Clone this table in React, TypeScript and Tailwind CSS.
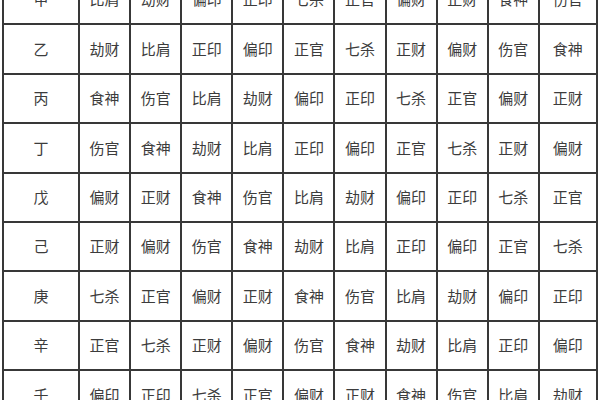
import React from "react";

const rows: [string, string[]][] = [
  ["甲", ["比肩", "劫财", "偏印", "正印", "七杀", "正官", "偏财", "正财", "食神", "伤官"]],
  ["乙", ["劫财", "比肩", "正印", "偏印", "正官", "七杀", "正财", "偏财", "伤官", "食神"]],
  ["丙", ["食神", "伤官", "比肩", "劫财", "偏印", "正印", "七杀", "正官", "偏财", "正财"]],
  ["丁", ["伤官", "食神", "劫财", "比肩", "正印", "偏印", "正官", "七杀", "正财", "偏财"]],
  ["戊", ["偏财", "正财", "食神", "伤官", "比肩", "劫财", "偏印", "正印", "七杀", "正官"]],
  ["己", ["正财", "偏财", "伤官", "食神", "劫财", "比肩", "正印", "偏印", "正官", "七杀"]],
  ["庚", ["七杀", "正官", "偏财", "正财", "食神", "伤官", "比肩", "劫财", "偏印", "正印"]],
  ["辛", ["正官", "七杀", "正财", "偏财", "伤官", "食神", "劫财", "比肩", "正印", "偏印"]],
  ["壬", ["偏印", "正印", "七杀", "正官", "偏财", "正财", "食神", "伤官", "比肩", "劫财"]],
];

export default function App() {
  return (
    <div className="w-[600px] h-[400px] overflow-hidden bg-white">
      <div
        className="ml-[2px] -mt-[26px] w-[596px] grid grid-cols-[74px_repeat(9,49.1px)_56px] auto-rows-[47.4px] gap-[2px] p-[2px] bg-[#383838] text-[15px] text-[#3c3c3c]"
        style={{ fontFamily: '"Noto Sans CJK SC", "Noto Sans", sans-serif' }}
      >
        {rows.map(([stem, cells]) => (
          <React.Fragment key={stem}>
            <div className="bg-white flex items-center justify-center">{stem}</div>
            {cells.map((c, i) => (
              <div key={i} className="bg-white flex items-center justify-center">
                {c}
              </div>
            ))}
          </React.Fragment>
        ))}
      </div>
    </div>
  );
}
